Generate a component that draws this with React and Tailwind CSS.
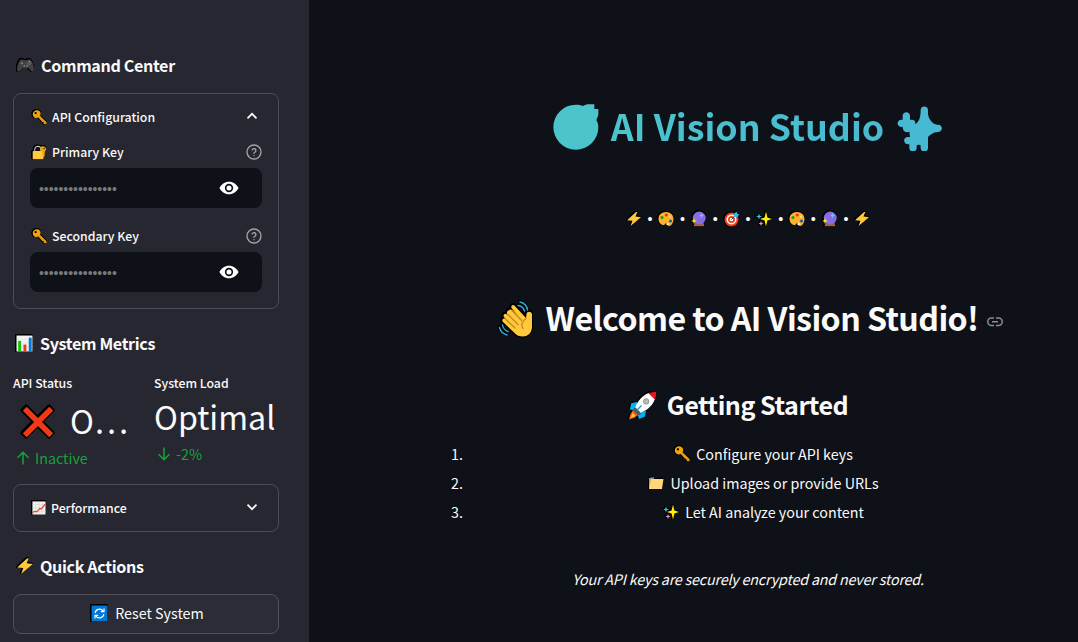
import React from "react";

const OUTLINE =
  "shrink-0 overflow-visible [filter:drop-shadow(0.7px_0_0_#000)_drop-shadow(-0.7px_0_0_#000)_drop-shadow(0_0.7px_0_#000)_drop-shadow(0_-0.7px_0_#000)]";

function Emoji({ size, box = 32, className = "", children }) {
  return (
    <svg width={size} height={size} viewBox={`0 0 ${box} ${box}`} className={`${OUTLINE} ${className}`} aria-hidden="true">
      {children}
    </svg>
  );
}

const Gamepad = (p) => (
  <Emoji {...p}>
    <path d="M8 6.5c3-1.5 4 .5 8 .5s5-2 8-.5C28 8 31 20 30 24.500c-.6 2.500-3 2.500-5 .5-2.500-2.500-3-5-5-5h-8c-2 0-2.500 2.500-5 5-2 2-4.400 2-5-.5C1 20 4 8 8 6.500Z" fill="#414141" />
    <circle cx="10" cy="12" r="2" fill="#777" />
    <circle cx="14" cy="16.500" r="1.700" fill="#777" />
    <circle cx="19" cy="16.500" r="1.700" fill="#777" />
    <circle cx="22.500" cy="9.500" r="1.200" fill="#f5c431" />
    <circle cx="25" cy="12" r="1.200" fill="#e8453a" />
    <circle cx="20" cy="12" r="1.200" fill="#3b8ee0" />
    <circle cx="22.500" cy="14" r="1.200" fill="#35b04a" />
  </Emoji>
);

const Key = (p) => (
  <Emoji {...p}>
    <path fillRule="evenodd" d="M4 3C8-1 15 0 17.500 4.500c1.500 3 1 6-.5 8L31 26v4.500h-4L24.500 28v-2.500H22L13.500 16C9 18 4 16.500 2.200 12 1 8.500 1.500 5.500 4 3Zm2.200 2a2.200 2.200 0 1 0 3.200 3.200A2.200 2.200 0 0 0 6.200 5Z" fill="#f0a30a" />
    <path d="M15 14.500 29.500 29.500" stroke="#d08a00" strokeWidth="1.200" />
  </Emoji>
);

const LockKey = (p) => (
  <Emoji {...p}>
    <path d="M6 14V9.500C6 1 19 1 19 9.500V14" fill="none" stroke="#c9c9c9" strokeWidth="2.600" />
    <path d="M7.500 13V9.500C8 3 17 3 17.500 9.500V13Z" fill="#111" />
    <rect x="1.500" y="13" width="23" height="17.500" rx="1.500" fill="#ffc83d" />
    <path d="M18 4.500c3-2.500 8-2 10.500.5 2.500 3 2 7-1 9L27 24l-2.500 2.500-2-2v-10c-5-1-7-6-4.500-10Z" fill="#f0a30a" />
    <circle cx="26" cy="7.500" r="1.600" fill="#222" />
  </Emoji>
);

const Bars = (p) => (
  <Emoji {...p}>
    <rect x="1" y="1" width="30" height="30" fill="#f3f3f3" />
    <path d="M1 8h30M1 15h30M1 22h30" stroke="#dcdcdc" />
    <rect x="4" y="11" width="5.500" height="20" fill="#16c60c" />
    <rect x="14" y="18" width="5.500" height="13" fill="#f03a17" />
    <rect x="24" y="5" width="5.500" height="26" fill="#0078d7" />
  </Emoji>
);

const Chart = (p) => (
  <Emoji {...p}>
    <rect x="1" y="1" width="30" height="30" fill="#f3f3f3" />
    <path d="M1 8.500h30M1 16h30M1 23.500h30M8.500 1v30M16 1v30M23.500 1v30" stroke="#d0d0d0" strokeWidth="1.200" />
    <path d="m2 26 5-2.500 4 1.500 7-8 3 1.500L30 7" fill="none" stroke="#f03a17" strokeWidth="2.600" />
  </Emoji>
);

const Cross = (p) => (
  <Emoji {...p}>
    <path d="M2.500 6 6 2.500l10 10 10-10L29.500 6l-10 10 10 10-3.500 3.500-10-10-10 10L2.500 26l10-10Z" fill="#f03a17" stroke="#000" strokeWidth="1.600" paintOrder="stroke" />
  </Emoji>
);

const Bolt = (p) => (
  <Emoji {...p}>
    <path d="M20 2 2 18.500l11 1L9 30l21-17.500-11-1.500L22.500 2Z" fill="#ffc83d" />
  </Emoji>
);

const Refresh = (p) => (
  <Emoji {...p}>
    <rect x="1" y="1" width="30" height="30" fill="#0078d7" />
    <path d="M8 15c0-7 10-10 15-4M24 17c0 7-10 10-15 4" fill="none" stroke="#fff" strokeWidth="2.200" />
    <path d="M24.500 6.500v6h-6M7.500 25.500v-6h6" fill="none" stroke="#fff" strokeWidth="2.200" />
  </Emoji>
);

const Palette = (p) => (
  <Emoji {...p}>
    <path d="M16 2C7 2 1 8 1 15.500 1 23 6 28 11 28c4 0 3-4 6-4s1 6 5 6c5 0 9-7 9-14C31 8 25 2 16 2Z" fill="#ffb02e" />
    <circle cx="8" cy="13" r="3.200" fill="#16a60c" />
    <circle cx="16.500" cy="8" r="3" fill="#e8321c" />
    <circle cx="25" cy="20" r="3" fill="#0063b1" />
    <circle cx="24" cy="11.500" r="2.400" fill="#ffd67a" />
    <circle cx="19" cy="26" r="2.400" fill="#fff" />
  </Emoji>
);

const Crystal = (p) => (
  <Emoji {...p}>
    <path d="M7 24h18l2 6.500H5Z" fill="#9a6448" />
    <circle cx="16.500" cy="14" r="13" fill="#886ce4" />
    <path d="m6 14 1.600 4.400L12 20l-4.400 1.600L6 26l-1.600-4.400L0 20l4.400-1.600Z" fill="#fff100" />
    <path d="m21 4 1.500 3.500L26 9l-3.500 1.500L21 14l-1.500-3.500L16 9l3.500-1.500Z" fill="#5fd0ff" />
  </Emoji>
);

const Target = (p) => (
  <Emoji {...p}>
    <circle cx="15" cy="17" r="14" fill="#f03a17" />
    <circle cx="15" cy="17" r="10" fill="#fff" />
    <circle cx="15" cy="17" r="7" fill="#f03a17" />
    <circle cx="15" cy="17" r="3.600" fill="#fff" />
    <path d="m15 17 7-7" stroke="#333" strokeWidth="2" />
    <path d="m19 12 1-6 5-5 1.500 4.500L31 7l-5 5Z" fill="#31b8f0" />
  </Emoji>
);

const Sparkles = (p) => (
  <Emoji {...p}>
    <path d="m20 1 2.800 12.200L32 16l-9.200 2.800L20 31l-2.800-12.200L8 16l9.200-2.800Z" fill="#fff100" />
    <path d="m6 5 1.600 4.400L12 11l-4.400 1.600L6 17l-1.600-4.400L0 11l4.400-1.600Z" fill="#31c5f0" />
    <path d="m10 20 1.500 3.500L15 25l-3.500 1.500L10 30l-1.500-3.500L5 25l3.500-1.500Z" fill="#f08ac0" />
  </Emoji>
);

const Folder = (p) => (
  <Emoji {...p}>
    <path d="M2 6h9l2 2.500h15V27H2Z" fill="#d49b2e" />
    <path d="M5 4.500h7v3H5Z" fill="#3b8ee0" />
    <path d="M6 8h25l-3 20H2Z" fill="#ffd679" />
  </Emoji>
);

const Wave = (p) => (
  <Emoji {...p} box={36}>
    <path d="M10.500 9.500c1.500-1.500 3-1 4 0l5 5L13.500 7c-1-2 1.500-4 3.200-2.300L28 17l.5-4c.3-3 5.500-3 5.500.5V26c0 5-3.500 9.500-9 9.500-4 0-6-1-9-4L5 21c-2-2 .5-4.500 2.500-3L6 16c-1.500-2 .8-4.500 3-2.500l1 1-.5-1c-1-1-1-3 1-4Z" fill="#ffc83d" stroke="#000" strokeWidth="1.400" paintOrder="stroke" />
    <path d="m14 9.500 9.500 10M10 13.500l10 10M7.500 18l9.500 9M28 17.500c-4 3-5.500 6-3 10" fill="none" stroke="#c58a16" strokeWidth="1.300" strokeLinecap="round" />
    <path d="M20 4.500c3 .3 5.500 2.500 6.500 5.500M22 1c4 .8 7 4 7.500 8M4.500 24c.5 3 2.500 5.500 5.500 6.500M1.500 26.500c1 4 4 6.500 7.500 7.500" fill="none" stroke="#31a8d8" strokeWidth="1.500" strokeLinecap="round" />
  </Emoji>
);

const Rocket = (p) => (
  <Emoji {...p}>
    <path d="M10 12 3.500 13.500 2 20.500l7 1ZM20 22l-1.500 6.500L12 31l-2-7Z" fill="#00b4f0" />
    <path d="m6 20 6 6-5 3.500-6 2 1.500-5.500Z" fill="#f7630c" />
    <path d="m5 24 3.500 3.500L3 30Z" fill="#ffc83d" />
    <path d="m8 18 7 7-4 2-6-6Z" fill="#505c63" />
    <path d="M8 18c3-8 9-14 16-16l6 6c-2 7-8 13-16 16Z" fill="#fff" />
    <path d="M22.500 2.500c3-1.300 6-1.500 8.500-1.500 0 3 0 5.500-1.500 8.500Z" fill="#e81224" />
    <circle cx="20" cy="11.500" r="3" fill="#bcbcbc" stroke="#8c8c8c" />
    <path d="m10 21 5-5" stroke="#00a2dd" strokeWidth="1.300" />
  </Emoji>
);

function Chevron({ up }) {
  return (
    <svg width="12" height="8" viewBox="0 0 12 8" fill="none" stroke="#fafafa" strokeWidth="1.700" aria-hidden="true" className="-mt-[2px]">
      <path d={up ? "m1.500 6.300 4.500-4.500 4.500 4.500" : "m1.500 1.700 4.500 4.500 4.500-4.500"} />
    </svg>
  );
}

function Help() {
  return (
    <svg width="16" height="16" viewBox="0 0 24 24" fill="none" stroke="#a3a4a9" strokeWidth="2" strokeLinecap="round" strokeLinejoin="round" aria-hidden="true">
      <circle cx="12" cy="12" r="10.500" />
      <path d="M9.100 9a3 3 0 0 1 5.800 1c0 2-3 2.500-3 4M12 17.500h.01" />
    </svg>
  );
}

function Eye() {
  return (
    <svg width="20" height="20" viewBox="0 0 24 24" className="shrink-0" aria-hidden="true">
      <path fill="#fff" d="M12 4.500C7 4.500 2.730 7.610.5 12c2.230 4.390 6.500 7.500 11.500 7.500s9.270-3.110 11.500-7.500C21.270 7.610 17 4.500 12 4.500ZM12 17a5 5 0 1 1 0-10 5 5 0 0 1 0 10Zm0-8a3 3 0 1 0 0 6 3 3 0 0 0 0-6Z" />
    </svg>
  );
}

function Arrow({ down }) {
  return (
    <svg width="14" height="14" viewBox="0 0 14 14" fill="none" stroke="#14a43c" strokeWidth="1.500" aria-hidden="true">
      <path d={down ? "M7 .5v12M1.500 7.200 7 12.700l5.500-5.500" : "M7 13.500v-12M1.500 6.800 7 1.300l5.500 5.500"} />
    </svg>
  );
}

function Heading({ icon, children, className }) {
  return (
    <div className={`flex h-[26px] items-center pl-[3px] text-[16.1px] font-bold tracking-[-0.34px] ${className}`}>
      {icon}
      {children}
    </div>
  );
}

function KeyField({ icon, label }) {
  return (
    <div>
      <div className="flex h-6 items-center justify-between text-[12.3px] font-medium">
        <span className="flex items-center gap-[5px] pl-[2px]">
          {icon}
          <span>{label}</span>
        </span>
        <Help />
      </div>
      <div className="mt-1 flex h-10 items-center justify-between rounded-lg bg-[#0e1117] pl-[9px] pr-[23px]">
        <span className="pt-[2px] font-['Liberation_Sans',sans-serif] text-[13.9px] leading-5 text-[#77797e]">••••••••••••••••</span>
        <Eye />
      </div>
    </div>
  );
}

const Dot = () => (
  <span className="w-[16.7px] text-center font-['Liberation_Sans',sans-serif] text-[14.3px] leading-6">•</span>
);

export default function App() {
  const trail = [Bolt, Palette, Crystal, Target, Sparkles, Palette, Crystal, Bolt];
  return (
    <div className="flex h-[642px] w-[1078px] overflow-hidden whitespace-nowrap bg-[#0e1117] font-['Noto_Sans_CJK_SC','Noto_Sans',sans-serif] text-[#fafafa]">
      <aside className="flex w-[309px] shrink-0 flex-col bg-[#262730] pl-[13px] pr-[30px] pt-[52px]">
        <Heading icon={<Gamepad size={19} />} className="gap-[6px]">
          <span>Command Center</span>
        </Heading>

        <section className="mt-[15px] h-[216px] rounded-lg border border-[#4c4d55] px-4">
          <div className="flex h-[46px] items-center justify-between pl-[2px] pr-1 text-[12.3px] font-medium">
            <span className="flex items-center gap-[5px]">
              <Key size={15} />
              <span>API Configuration</span>
            </span>
            <Chevron up />
          </div>
          <KeyField icon={<LockKey size={15} />} label="Primary Key" />
          <div className="h-4" />
          <KeyField icon={<Key size={15} />} label="Secondary Key" />
        </section>

        <Heading icon={<Bars size={17} />} className="mt-[21px] gap-[7px]">
          <span>System Metrics</span>
        </Heading>

        <div className="mt-[17px] flex h-[96px]">
          <div className="w-[141px]">
            <div className="h-5 text-[12.3px] font-medium leading-5">API Status</div>
            <div className="flex h-[54px] items-center gap-[14px] pl-[7px] text-[32.2px] leading-[54px]">
              <Cross size={36} className="mt-[3px]" />
              <span>O…</span>
            </div>
            <div className="flex h-[22px] items-center gap-[5px] pl-[3px] text-[14.3px] text-[#14a43c]">
              <Arrow />
              <span>Inactive</span>
            </div>
          </div>
          <div>
            <div className="h-5 text-[12.3px] font-medium leading-5">System Load</div>
            <div className="h-[46px] text-[32.2px] leading-[46px]">Optimal</div>
            <div className="mt-1 flex h-[22px] items-center gap-[5px] pl-[3px] text-[14.3px] text-[#14a43c]">
              <Arrow down />
              <span>-2%</span>
            </div>
          </div>
        </div>

        <section className="mt-[15px] flex h-12 items-center justify-between rounded-lg border border-[#4c4d55] pl-[18px] pr-5 text-[12.3px] font-medium">
          <span className="flex items-center gap-[5px]">
            <Chart size={14} />
            <span>Performance</span>
          </span>
          <Chevron />
        </section>

        <Heading icon={<Bolt size={18} />} className="mt-[21px] gap-[6px]">
          <span>Quick Actions</span>
        </Heading>

        <button className="mt-[15px] flex h-10 items-center justify-center gap-[7px] rounded-lg border border-[#4f5058] bg-[#2b2c36] pb-[2px] pl-[3px] text-[14.3px]">
          <Refresh size={17} />
          <span>Reset System</span>
        </button>
      </aside>

      <main className="flex grow flex-col items-center pl-[127px] pr-[18px] pt-[95px]">
        <h1 className="flex h-[60px] items-center bg-gradient-to-r from-[#4dc5cb] to-[#48b8d3] bg-clip-text text-[35.8px] font-bold leading-[60px] text-transparent">
          <svg width="46" height="46" viewBox="0 0 138 138" className="mt-[3px] shrink-0" aria-hidden="true">
            <path fill="#4cc4cc" d="M69 2c8 0 15 1 21 4 5-3 11-5 18-5h16v14h12v18l-6 16c4 6 6 13 6 21a67.500 67.500 0 1 1-67-68Z" />
          </svg>
          <span className="ml-[12px] mr-[13px]">AI Vision Studio</span>
          <svg width="46" height="46" viewBox="0 0 138 138" className="-ml-[1px] mr-[1px] mt-[5px] shrink-0" aria-hidden="true">
            <path fill="#48b9d2" d="M74 15c0-14 22-14 22 0v12c2 13 7 20 14 26 5 4 11 6 17 6 14 0 14 22 0 22-13 0-23 6-31 15v33c0 14-22 14-22 0v-7c-2-4-10-4-12 0v7c0 14-22 14-22 0v-11h-4c-15 0-16-22 0-22h6l-2-16c-10 4-20 0-20-14h-4c-15 0-15-22 0-22h4v-12c0-14 22-14 22 0v12h6c9 0 12 8 9 14 10-5 17-17 17-43Z" />
          </svg>
        </h1>

        <div className="mt-[52px] flex h-6 items-center">
          {trail.map((Icon, i) => (
            <React.Fragment key={i}>
              {i > 0 && <Dot />}
              <Icon size={16} />
            </React.Fragment>
          ))}
        </div>

        <h2 className="mt-[62px] flex h-12 items-center pl-[5px] text-[32.2px] font-bold leading-[48px] tracking-[-0.6px]">
          <Wave size={36} className="mt-[3px]" />
          <span className="ml-[12px]">Welcome to AI Vision Studio!</span>
          <svg width="16" height="10" viewBox="0 0 16 10" className="ml-[9px] mt-[9px]" fill="none" stroke="#8a8c91" strokeWidth="1.500" aria-hidden="true">
            <path d="M7 1H4.500a3.700 3.700 0 0 0 0 7.500H7M9 1h2.500a3.700 3.700 0 0 1 0 7.500H9M5 4.750h6" />
          </svg>
        </h2>

        <h3 className="mt-[43px] flex h-10 items-center pr-[20px] text-[25.1px] font-bold leading-10 tracking-[-0.48px]">
          <Rocket size={29} className="mt-[2px]" />
          <span className="ml-[10px]">Getting Started</span>
        </h3>

        <ol className="mt-[15px] w-full text-[14.3px]">
          {[
            [Key, "Configure your API keys"],
            [Folder, "Upload images or provide URLs"],
            [Sparkles, "Let AI analyze your content"],
          ].map(([Icon, text], i) => (
            <li key={text} className="flex h-[29px] items-center">
              <span className="w-[30px] pl-[15px]">{i + 1}.</span>
              <span className="flex grow items-center justify-center gap-[6px] pl-[1px]">
                <Icon size={16} />
                <span>{text}</span>
              </span>
            </li>
          ))}
        </ol>

        <p className="mt-[41px] h-6 text-[14.3px] italic leading-6 tracking-[-0.18px]">Your API keys are securely encrypted and never stored.</p>
      </main>
    </div>
  );
}
